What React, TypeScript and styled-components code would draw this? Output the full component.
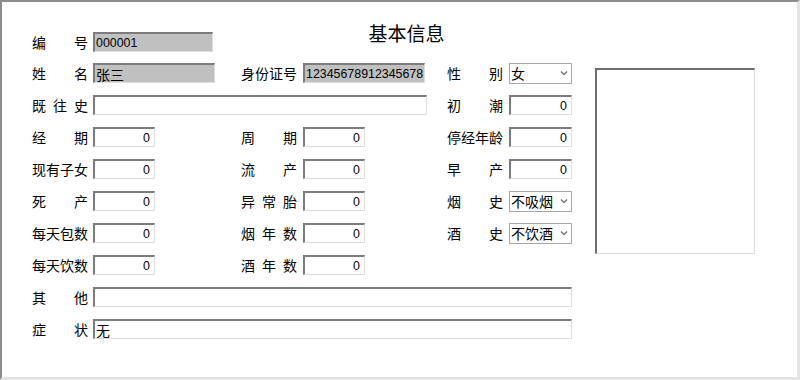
import React from "react";
import styled, { createGlobalStyle } from "styled-components";

const Global = createGlobalStyle`
  html, body { margin: 0; padding: 0; background: #fff; }
  body { font-family: "Noto Sans CJK SC", "Liberation Sans", sans-serif; }
  * { box-sizing: border-box; }
`;

const Frame = styled.div`
  width: 800px;
  height: 380px;
  background: #fff;
  border-top: 2px solid #8c8c8c;
  border-left: 2px solid #8c8c8c;
  border-right: 3px solid #e4e4e4;
  border-bottom: 3px solid #e4e4e4;
  display: flex;
  align-items: flex-start;
  padding: 25px 0 0 30px;
`;

const Form = styled.div`
  display: flex;
  flex-direction: column;
`;

const Row = styled.div<{ $h?: number }>`
  display: grid;
  grid-template-columns: 61px 148px 62px 144px 62px 63px;
  height: ${(p) => p.$h ?? 32}px;
  align-items: center;
`;

const Label = styled.div<{ $col?: number }>`
  grid-column: ${(p) => p.$col ?? "auto"};
  width: 56px;
  display: flex;
  justify-content: space-between;
  font-family: "Noto Sans CJK SC", sans-serif;
  font-size: 14px;
  line-height: 16px;
  color: #000;
`;

const Title = styled.div`
  grid-column: 3 / span 4;
  align-self: start;
  margin-top: -5px;
  text-align: center;
  font-family: "Noto Sans CJK SC", sans-serif;
  font-size: 19px;
  line-height: 22px;
  font-weight: 400;
  color: #000;
`;

const Input = styled.input<{ $w: number; $gray?: boolean; $cjk?: boolean; $num?: boolean; $span?: string }>`
  grid-column: ${(p) => p.$span ?? "auto"};
  width: ${(p) => p.$w}px;
  height: 20px;
  margin: 0;
  padding: ${(p) => (p.$num ? "0 4px 0 2px" : "0 1px")};
  border-top: 2px solid #7c7c7c;
  border-left: 2px solid #7c7c7c;
  border-right: 1px solid #dedede;
  border-bottom: 1px solid #dedede;
  background: ${(p) => (p.$gray ? "#c0c0c0" : "#fff")};
  color: #000;
  outline: none;
  text-align: ${(p) => (p.$num ? "right" : "left")};
  font-family: ${(p) =>
    p.$cjk ? '"Noto Sans CJK SC", sans-serif' : '"Liberation Sans", sans-serif'};
  font-size: ${(p) => (p.$cjk ? "14px" : "12.4px")};
  line-height: 16px;
`;

const SelectBox = styled.div`
  width: 63px;
  height: 21px;
  border: 1px solid #a8a8a8;
  background: #fff;
  display: flex;
  align-items: center;
  justify-content: space-between;
  padding: 0 3px 0 1px;
  font-family: "Noto Sans CJK SC", sans-serif;
  font-size: 14px;
  line-height: 16px;
  color: #000;
`;

const Photo = styled.div`
  width: 160px;
  height: 186px;
  margin: 41px 0 0 23px;
  border-top: 2px solid #6e6e6e;
  border-left: 2px solid #6e6e6e;
  border-right: 1px solid #dcdcdc;
  border-bottom: 1px solid #dcdcdc;
  background: #fff;
`;

const Chevron = () => (
  <svg width="8" height="6" viewBox="0 0 8 6">
    <polyline points="1,1.5 4,4.5 7,1.5" fill="none" stroke="#777" strokeWidth="1.5" />
  </svg>
);

const L = ({ t, col }: { t: string; col?: number }) => (
  <Label $col={col}>
    {t.split("").map((c, i) => (
      <span key={i}>{c}</span>
    ))}
  </Label>
);

const Select = ({ v }: { v: string }) => (
  <SelectBox>
    <span>{v}</span>
    <Chevron />
  </SelectBox>
);

const Num = ({ w = 62 }: { w?: number }) => <Input $w={w} $num readOnly value="0" />;

export default function App() {
  return (
    <>
      <Global />
      <Frame>
        <Form>
          <Row $h={30}>
            <L t="编号" />
            <Input $w={120} $gray readOnly value="000001" />
            <Title>基本信息</Title>
          </Row>
          <Row>
            <L t="姓名" />
            <Input $w={122} $gray $cjk readOnly value="张三" />
            <L t="身份证号" />
            <Input $w={122} $gray readOnly value="12345678912345678" />
            <L t="性别" />
            <Select v="女" />
          </Row>
          <Row>
            <L t="既往史" />
            <Input $w={334} $span="2 / span 3" readOnly value="" />
            <L t="初潮" />
            <Num w={63} />
          </Row>
          <Row>
            <L t="经期" />
            <Num />
            <L t="周期" />
            <Num />
            <L t="停经年龄" />
            <Num w={63} />
          </Row>
          <Row>
            <L t="现有子女" />
            <Num />
            <L t="流产" />
            <Num />
            <L t="早产" />
            <Num w={63} />
          </Row>
          <Row>
            <L t="死产" />
            <Num />
            <L t="异常胎" />
            <Num />
            <L t="烟史" />
            <Select v="不吸烟" />
          </Row>
          <Row>
            <L t="每天包数" />
            <Num />
            <L t="烟年数" />
            <Num />
            <L t="酒史" />
            <Select v="不饮酒" />
          </Row>
          <Row>
            <L t="每天饮数" />
            <Num />
            <L t="酒年数" />
            <Num />
          </Row>
          <Row>
            <L t="其他" />
            <Input $w={479} $span="2 / span 5" readOnly value="" />
          </Row>
          <Row>
            <L t="症状" />
            <Input $w={479} $span="2 / span 5" $cjk readOnly value="无" />
          </Row>
        </Form>
        <Photo />
      </Frame>
    </>
  );
}
